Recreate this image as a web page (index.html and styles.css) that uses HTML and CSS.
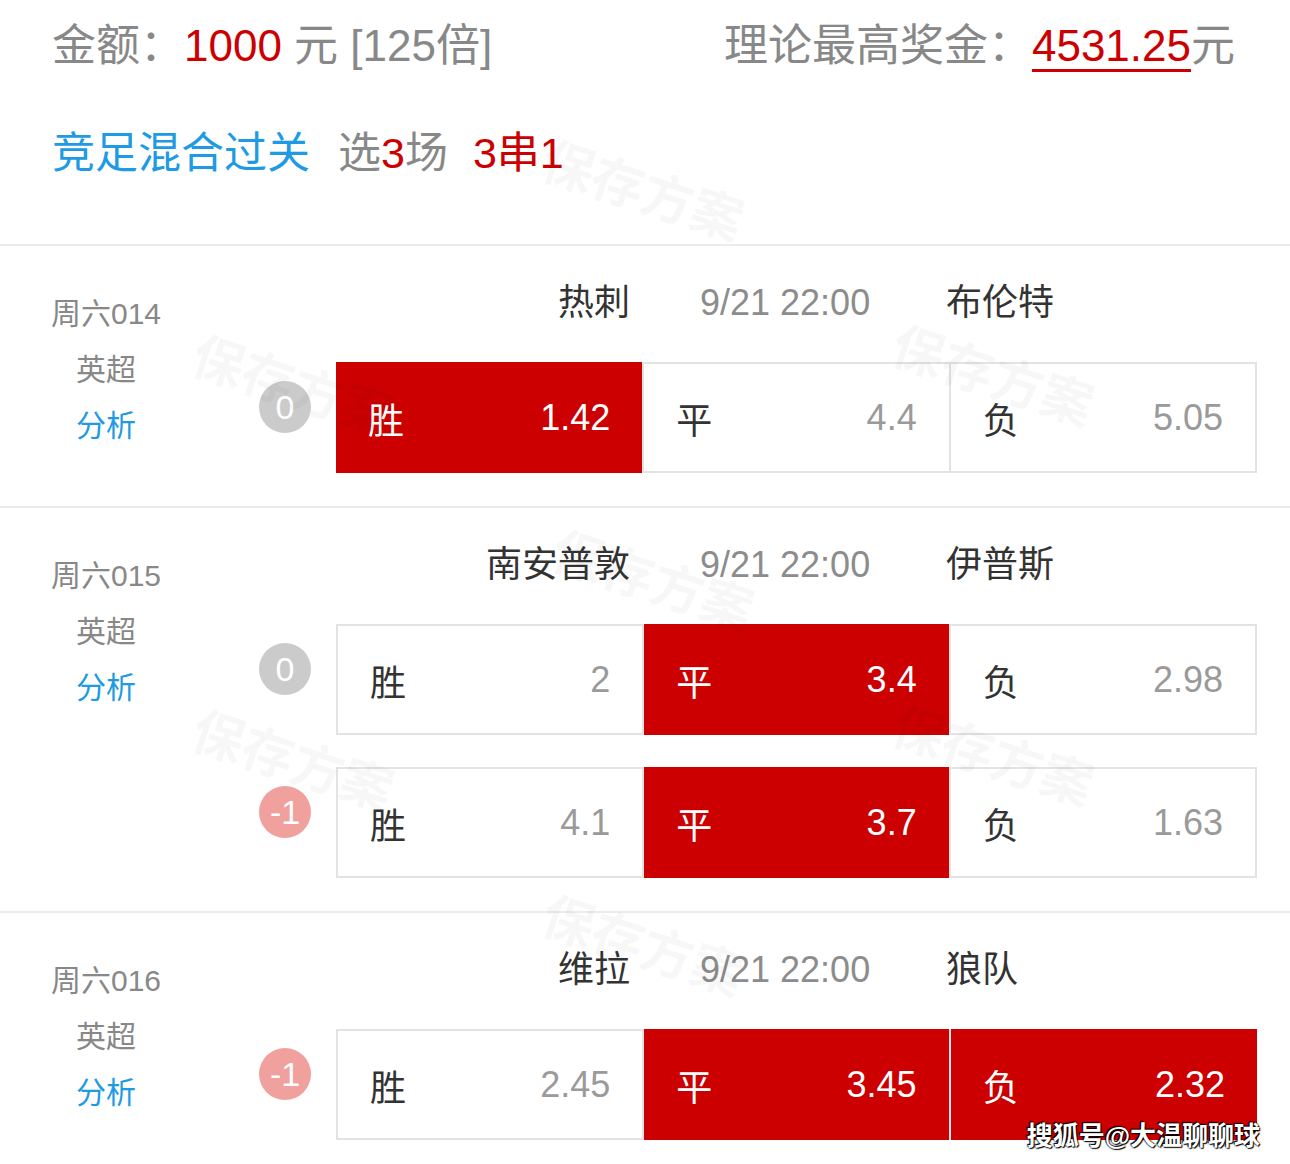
FILE: index.html
```html
<html>
  <head>
    <meta charset="utf-8">
    <link rel="stylesheet" href="styles.css">
  </head>

  <body>
    <div class="page">
      <div class="summary">
        <div class="summary-line">
          <div>金额：<span class="red">1000</span> 元 [125倍]</div>
          <div>理论最高奖金：<span class="prize">4531.25</span>元</div>
        </div>
        <div class="summary-line play">
          <span class="blue">竞足混合过关</span>
          <span class="pick">选<span class="red">3</span>场</span>
          <span class="red pass">3串1</span>
        </div>
      </div>

      <div class="match">
        <div class="meta">
          <div>周六014</div>
          <div>英超</div>
          <div class="blue">分析</div>
        </div>
        <div class="body">
          <div class="teams">
            <span class="home">热刺</span>
            <span class="time">9/21 22:00</span>
            <span class="away">布伦特</span>
          </div>
          <div class="odds-row">
            <span class="badge">0</span>
            <div class="odds">
              <div class="cell on"><span>胜</span><span>1.42</span></div>
              <div class="cell"><span>平</span><span class="val">4.4</span></div>
              <div class="cell"><span>负</span><span class="val">5.05</span></div>
            </div>
          </div>
        </div>
      </div>

      <div class="match">
        <div class="meta">
          <div>周六015</div>
          <div>英超</div>
          <div class="blue">分析</div>
        </div>
        <div class="body">
          <div class="teams">
            <span class="home">南安普敦</span>
            <span class="time">9/21 22:00</span>
            <span class="away">伊普斯</span>
          </div>
          <div class="odds-row">
            <span class="badge">0</span>
            <div class="odds">
              <div class="cell"><span>胜</span><span class="val">2</span></div>
              <div class="cell on"><span>平</span><span>3.4</span></div>
              <div class="cell"><span>负</span><span class="val">2.98</span></div>
            </div>
          </div>
          <div class="odds-row">
            <span class="badge minus">-1</span>
            <div class="odds">
              <div class="cell"><span>胜</span><span class="val">4.1</span></div>
              <div class="cell on"><span>平</span><span>3.7</span></div>
              <div class="cell"><span>负</span><span class="val">1.63</span></div>
            </div>
          </div>
        </div>
      </div>

      <div class="match">
        <div class="meta">
          <div>周六016</div>
          <div>英超</div>
          <div class="blue">分析</div>
        </div>
        <div class="body">
          <div class="teams">
            <span class="home">维拉</span>
            <span class="time">9/21 22:00</span>
            <span class="away">狼队</span>
          </div>
          <div class="odds-row">
            <span class="badge minus">-1</span>
            <div class="odds">
              <div class="cell"><span>胜</span><span class="val">2.45</span></div>
              <div class="cell on"><span>平</span><span>3.45</span></div>
              <div class="cell on"><span>负</span><span>2.32</span></div>
            </div>
          </div>
        </div>
      </div>

      <div class="marks">
        <span class="mark m2">保存方案</span>
        <span class="mark m3">保存方案</span>
        <span class="mark m4">保存方案</span>
        <span class="mark m5">保存方案</span>
        <span class="mark m6">保存方案</span>
        <span class="mark m7">保存方案</span>
        <span class="mark m8">保存方案</span>
      </div>

      <div class="credit">搜狐号@大温聊聊球</div>
    </div>
  </body>
</html>
```

FILE: styles.css
```css
body {
  margin: 0;
  background: #fff;
  font-family: "Liberation Sans", "Noto Sans CJK SC", sans-serif;
  color: #333;
}

.page {
  position: relative;
  width: 1290px;
  height: 1164px;
  overflow: hidden;
}

.red {
  color: #cc0000;
}

.blue {
  color: #1e9be2;
}

.summary {
  padding: 18px 55px 63px 52px;
  color: #888;
  font-size: 44px;
}

.summary-line {
  display: flex;
  justify-content: space-between;
  line-height: 56px;
}

.summary-line.play {
  justify-content: flex-start;
  margin-top: 51px;
  font-size: 43px;
}

.pick {
  margin-left: 28px;
}

.pass {
  margin-left: 25px;
}

.prize {
  color: #cc0000;
  text-decoration: underline;
  text-decoration-thickness: 3px;
  text-underline-offset: 8px;
}

.match {
  display: grid;
  grid-template-columns: 212px 1fr;
  border-top: 2px solid #ececec;
  padding: 29px 0 33px;
}

.meta {
  margin-top: 11px;
  text-align: center;
  font-size: 30px;
  line-height: 56px;
  color: #888;
}

.meta .blue {
  color: #1e9be2;
}

.body {
  padding: 0 33px 0 47px;
}

.teams {
  display: grid;
  grid-template-columns: repeat(3, 1fr);
  margin-left: 77px;
  margin-bottom: 31px;
  font-size: 36px;
  line-height: 56px;
}

.home {
  text-align: right;
  padding-right: 13px;
}

.time {
  padding-left: 57px;
  color: #8c8c8c;
}

.away {
  margin-left: -4px;
}

.odds-row {
  display: flex;
  align-items: center;
  gap: 25px;
}

.odds-row + .odds-row {
  margin-top: 32px;
}

.badge {
  flex: none;
  width: 52px;
  height: 52px;
  margin-bottom: 22px;
  border-radius: 50%;
  background: #cbcbcb;
  color: #fff;
  font-size: 34px;
  line-height: 52px;
  text-align: center;
}

.badge.minus {
  background: #f0a19d;
}

.odds {
  flex: 1;
  display: grid;
  grid-template-columns: repeat(3, 1fr);
  gap: 2px;
  padding: 2px;
  height: 107px;
  background: #e3e3e3;
}

.cell {
  display: flex;
  justify-content: space-between;
  align-items: center;
  padding: 0 32px;
  background: #fff;
  font-size: 36px;
}

.cell .val {
  color: #9a9a9a;
}

.cell.on {
  margin: -2px 0;
  background: #cc0000;
  color: #fff;
}

.cell.on:first-child {
  margin-left: -2px;
}

.cell.on:last-child {
  margin-right: -2px;
}

.cell.on + .cell.on {
  box-shadow: -2px 0 0 #f6e6e6;
}

.marks {
  position: absolute;
  inset: 0;
  pointer-events: none;
}

.mark {
  position: absolute;
  font-size: 52px;
  font-weight: bold;
  color: rgba(0, 0, 0, 0.03);
  transform: rotate(18deg);
  white-space: nowrap;
}

.m2 { left: 540px; top: 150px; }
.m3 { left: 190px; top: 345px; }
.m4 { left: 890px; top: 335px; }
.m5 { left: 550px; top: 540px; }
.m6 { left: 190px; top: 720px; }
.m7 { left: 890px; top: 715px; }
.m8 { left: 540px; top: 905px; }

.credit {
  position: absolute;
  right: 30px;
  bottom: 12px;
  font-size: 26px;
  font-weight: bold;
  color: #fff;
  text-shadow: 0 0 2px #000, 1px 1px 1px #000, -1px -1px 1px #000;
}
```
